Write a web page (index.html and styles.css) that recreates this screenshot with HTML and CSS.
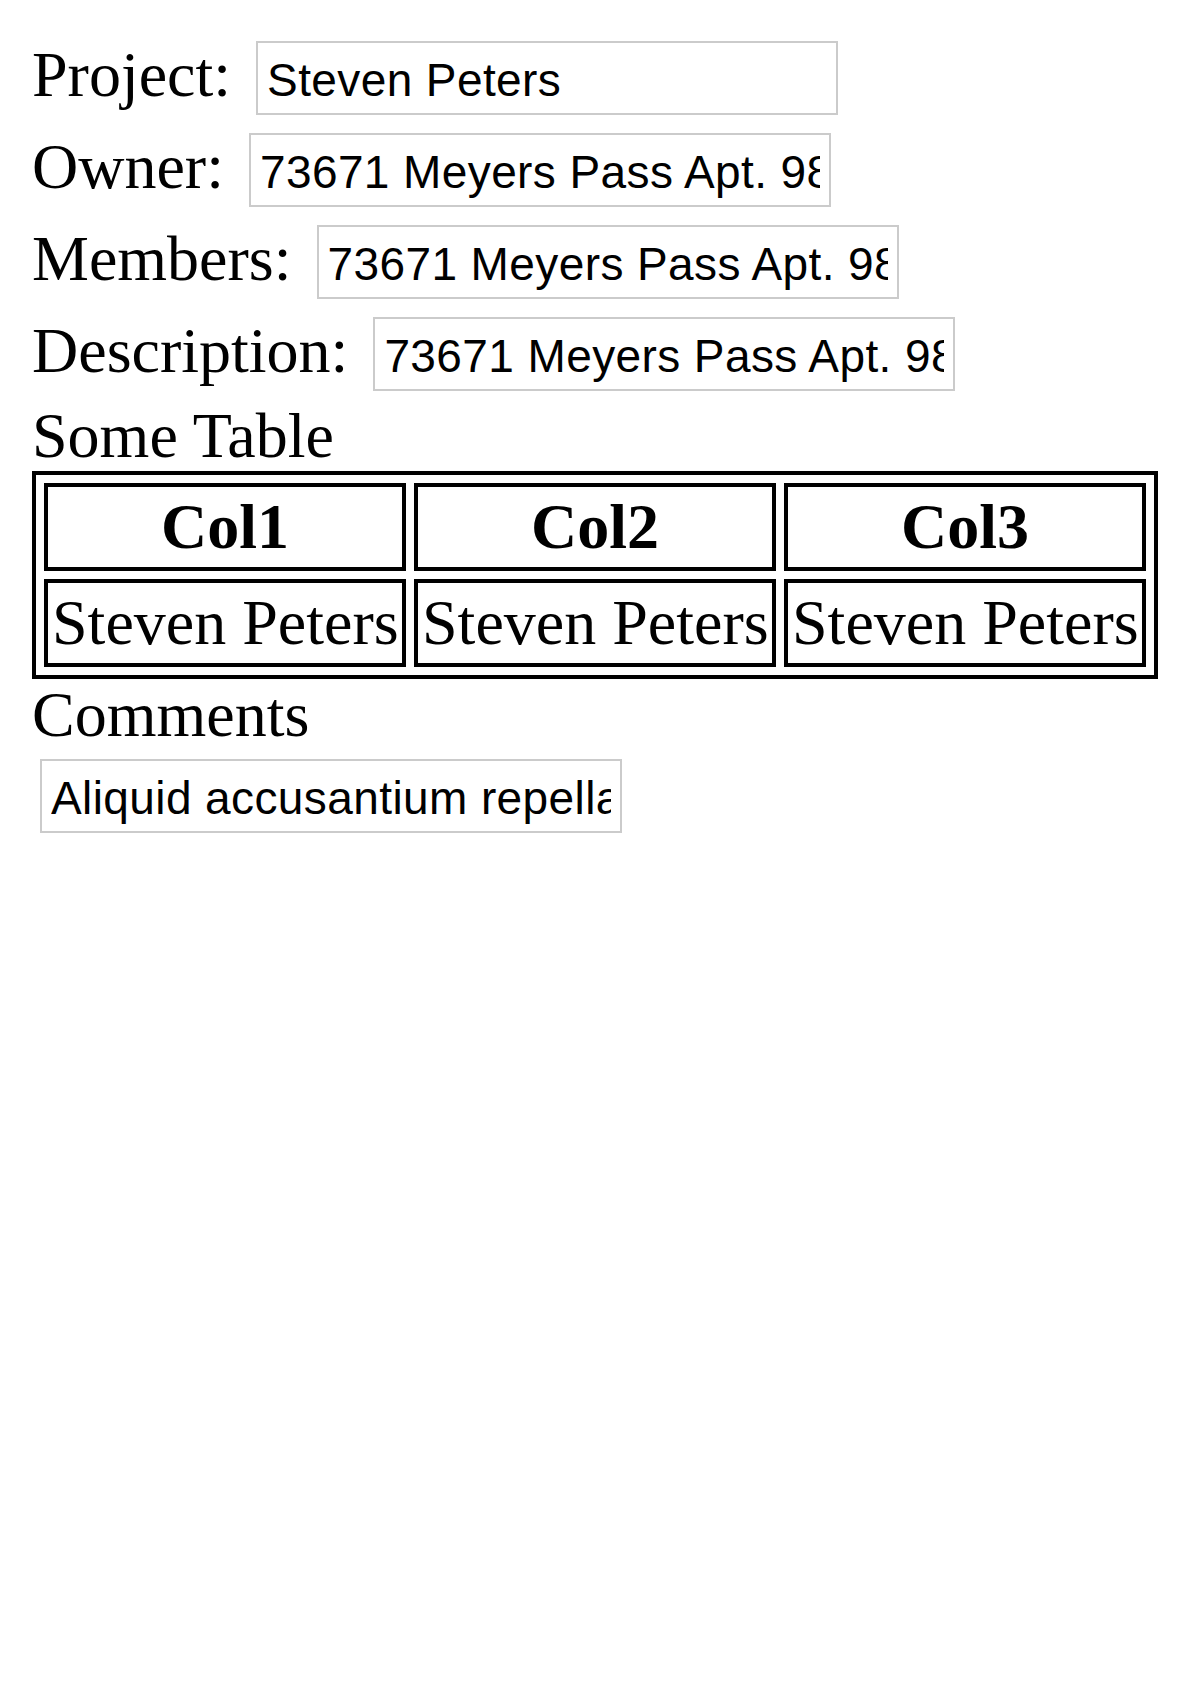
FILE: index.html
```html
<!DOCTYPE html>
<html lang="en">
<head>
<meta charset="utf-8">
<title>Project</title>
<link rel="stylesheet" href="styles.css">
</head>
<body>
<div class="page">
  <div class="field">
    <label class="field-label" for="project">Project:</label>
    <input class="text-input" id="project" type="text" value="Steven Peters">
  </div>
  <div class="field">
    <label class="field-label" for="owner">Owner:</label>
    <input class="text-input" id="owner" type="text" value="73671 Meyers Pass Apt. 985">
  </div>
  <div class="field">
    <label class="field-label" for="members">Members:</label>
    <input class="text-input" id="members" type="text" value="73671 Meyers Pass Apt. 985">
  </div>
  <div class="field">
    <label class="field-label" for="description">Description:</label>
    <input class="text-input" id="description" type="text" value="73671 Meyers Pass Apt. 985">
  </div>

  <div class="section-title">Some Table</div>
  <table class="data-table">
    <thead>
      <tr><th>Col1</th><th>Col2</th><th>Col3</th></tr>
    </thead>
    <tbody>
      <tr><td>Steven Peters</td><td>Steven Peters</td><td>Steven Peters</td></tr>
    </tbody>
  </table>

  <div class="section-title">Comments</div>
  <div class="comments-row">
    <input class="text-input" type="text" value="Aliquid accusantium repellat voluptatem est.">
  </div>
</div>
</body>
</html>
```

FILE: styles.css
```css
html, body {
  margin: 0;
  padding: 0;
  background: #ffffff;
}

body {
  font-family: "Liberation Serif", "Times New Roman", serif;
  font-size: 64px;
  color: #000;
}

.page {
  padding: 32px;
}

.field {
  display: flex;
  align-items: baseline;
  column-gap: 16px;
}

.field-label {
  font-weight: normal;
  white-space: nowrap;
}

.text-input {
  box-sizing: border-box;
  width: 582px;
  height: 74px;
  margin: 9px;
  padding: 4px 9px 0;
  border: 2px solid #cbcbcb;
  border-radius: 0;
  background: #fff;
  color: #000;
  font-family: "Liberation Sans", Arial, sans-serif;
  font-size: 46px;
  letter-spacing: 0.4px;
  outline: none;
}

.field .text-input {
  margin-left: 9px;
}

.section-title {
  line-height: 71px;
}

.data-table {
  width: 100%;
  table-layout: fixed;
  border: 4px solid #000;
  border-collapse: separate;
  border-spacing: 8px;
}

.data-table th,
.data-table td {
  border: 4px solid #000;
  padding: 2px 4px;
  line-height: 76px;
  white-space: nowrap;
  overflow: hidden;
}

.data-table th {
  font-weight: bold;
  text-align: center;
}

.data-table td {
  text-align: left;
}

.comments-row {
  display: flex;
}

.comments-row .text-input {
  margin-left: 8px;
}
```
